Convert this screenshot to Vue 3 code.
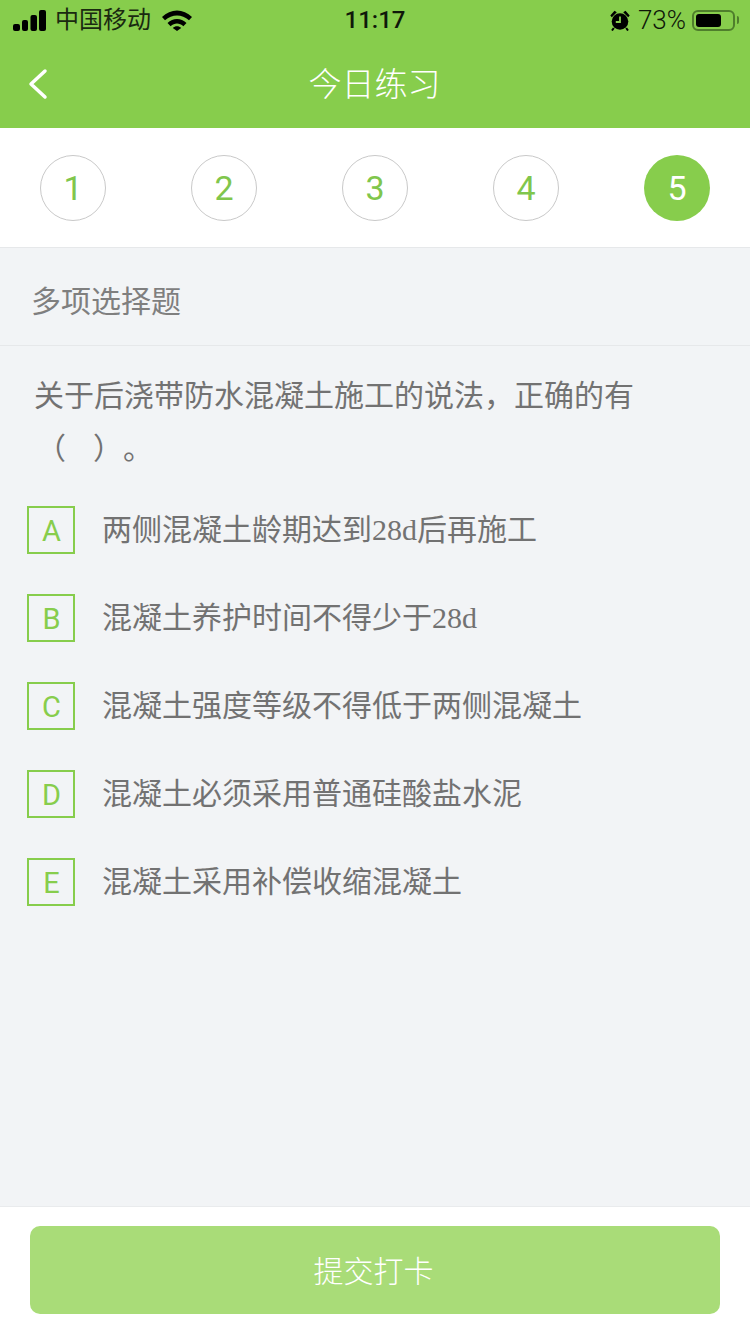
<script setup>
const steps = [1, 2, 3, 4, 5]
const current = 5

const options = [
  { key: 'A', text: '两侧混凝土龄期达到', num: '28d', tail: '后再施工' },
  { key: 'B', text: '混凝土养护时间不得少于', num: '28d', tail: '' },
  { key: 'C', text: '混凝土强度等级不得低于两侧混凝土', num: '', tail: '' },
  { key: 'D', text: '混凝土必须采用普通硅酸盐水泥', num: '', tail: '' },
  { key: 'E', text: '混凝土采用补偿收缩混凝土', num: '', tail: '' },
]
</script>

<template>
  <div class="page">
    <header class="top">
      <div class="status">
        <div class="status-left">
          <svg class="signal" width="33" height="21" viewBox="0 0 33 21">
            <rect x="0" y="14" width="7" height="7" rx="2" />
            <rect x="9" y="10" width="6" height="11" rx="2" />
            <rect x="17.500" y="5" width="6.500" height="16" rx="2" />
            <rect x="26" y="0" width="7" height="21" rx="2" />
          </svg>
          <span class="carrier">中国移动</span>
          <svg class="wifi" width="30" height="21" viewBox="0 0 30 21">
            <path d="M0 7C8.500-1.700 21.500-1.700 30 7l-3 3.300C20 4 10 4 3 10.300z" />
            <path d="M5.500 13C11 7.600 19 7.600 24.500 13l-3.100 3.300C17.500 12.600 12.500 12.600 8.600 16.300z" />
            <path d="M10.800 18C13 15.700 17 15.700 19.200 18L15 21z" />
          </svg>
        </div>
        <span class="time">11:17</span>
        <div class="status-right">
          <svg class="alarm" width="20" height="21" viewBox="0 0 20 21">
            <circle cx="10" cy="11.500" r="8.300" />
            <path d="M.3 5.500L4.500.7l2.300 1.500-5 5zM19.700 5.500L15.500.7l-2.300 1.500 5 5z" />
            <path class="hands" d="M10 6.500v5.500H5.800" />
            <path d="M3.800 18l-1.800 2.500M16.200 18l1.800 2.500" stroke="#000" stroke-width="2" />
          </svg>
          <span class="percent">73%</span>
          <div class="battery"><div class="level"></div></div>
          <div class="battery-cap"></div>
        </div>
      </div>
      <div class="nav">
        <svg class="back" width="22" height="34" viewBox="0 0 22 34">
          <path d="M18 4L4 17l14 13" />
        </svg>
        <h1 class="title">今日练习</h1>
      </div>
    </header>

    <div class="steps">
      <div
        v-for="n in steps"
        :key="n"
        class="step"
        :class="{ active: n === current }"
      >{{ n }}</div>
    </div>

    <main class="body">
      <div class="kind">多项选择题</div>
      <div class="question">
        <p class="stem">关于后浇带防水混凝土施工的说法，正确的有</p>
        <p class="stem blank">（<span class="gap"></span>）。</p>
      </div>
      <ul class="options">
        <li v-for="o in options" :key="o.key" class="option">
          <span class="letter">{{ o.key }}</span>
          <span class="text">{{ o.text }}<span v-if="o.num" class="num">{{ o.num }}</span>{{ o.tail }}</span>
        </li>
      </ul>
    </main>

    <footer class="bottom">
      <button class="submit" type="button">提交打卡</button>
    </footer>
  </div>
</template>

<style scoped>
.page {
  width: 750px;
  height: 1334px;
  display: flex;
  flex-direction: column;
  background: #f2f4f6;
  font-family: "Liberation Sans", "Noto Sans CJK SC", sans-serif;
  overflow: hidden;
}

.top {
  height: 128px;
  flex: none;
  background: #87cd4c;
}

.status {
  height: 40px;
  padding: 0 11px 0 13px;
  display: flex;
  align-items: center;
  position: relative;
  color: #000;
}

.status-left {
  display: flex;
  align-items: center;
}

.signal {
  fill: #000;
}

.carrier {
  margin-left: 9px;
  font-size: 24px;
  line-height: 40px;
  color: #1a2a10;
}

.wifi {
  fill: #000;
  margin-left: 11px;
}

.time {
  position: absolute;
  left: 0;
  right: 0;
  text-align: center;
  font-family: Roboto, "Liberation Sans", sans-serif;
  font-size: 24px;
  font-weight: 500;
  color: #10180a;
}

.status-right {
  margin-left: auto;
  display: flex;
  align-items: center;
}

.alarm {
  fill: #000;
  margin-right: 8px;
}

.hands {
  fill: none;
  stroke: #87cd4c;
  stroke-width: 1.800;
}

.percent {
  font-family: Roboto, "Liberation Sans", sans-serif;
  font-weight: 300;
  font-size: 26px;
  color: #0e1608;
  margin-right: 6px;
}

.battery {
  width: 43px;
  height: 21px;
  border: 2px solid #4f7e2c;
  border-radius: 6px;
  padding: 2px;
  box-sizing: border-box;
}

.level {
  width: 72%;
  height: 100%;
  background: #000;
  border-radius: 3px;
}

.battery-cap {
  width: 2px;
  height: 8px;
  margin-left: 2px;
  background: #4f7e2c;
  border-radius: 0 2px 2px 0;
}

.nav {
  height: 88px;
  display: flex;
  align-items: center;
  justify-content: center;
  position: relative;
}

.back {
  position: absolute;
  left: 27px;
  top: 27px;
  fill: none;
  stroke: #fff;
  stroke-width: 3.500;
  stroke-linecap: round;
  stroke-linejoin: round;
}

.title {
  margin: 0 1px 5px 0;
  font-size: 33px;
  font-weight: 300;
  color: #fff;
}

.steps {
  height: 120px;
  flex: none;
  padding: 0 40px;
  box-sizing: border-box;
  display: flex;
  align-items: center;
  justify-content: space-between;
  background: #fff;
  border-bottom: 1px solid #e6e8ea;
}

.step {
  width: 66px;
  height: 66px;
  box-sizing: border-box;
  border: 1px solid #c9c9c9;
  border-radius: 50%;
  display: flex;
  align-items: center;
  justify-content: center;
  font-family: Roboto, "Liberation Sans", sans-serif;
  font-size: 34px;
  color: #80c64c;
}

.step.active {
  border: 0;
  background: #87cd4c;
  color: #fff;
}

.body {
  flex: 1;
}

.kind {
  height: 98px;
  box-sizing: border-box;
  padding-left: 31px;
  line-height: 108px;
  font-size: 30px;
  color: #7f7f7f;
  border-bottom: 1px solid #e6e8ea;
}

.question {
  padding: 23px 32px 0 34px;
}

.stem {
  margin: 0;
  font-size: 30px;
  line-height: 53px;
  color: #727272;
}

.blank {
  margin-left: 2px;
  text-spacing-trim: space-all;
}

.gap {
  display: inline-block;
  width: 27px;
}

.options {
  list-style: none;
  margin: 0;
  padding: 31px 0 0 27px;
}

.option {
  height: 88px;
  display: flex;
  align-items: flex-start;
}

.letter {
  width: 48px;
  height: 48px;
  box-sizing: border-box;
  border: 2px solid #87cd4c;
  padding: 2px 0 0 1px;
  display: flex;
  align-items: center;
  justify-content: center;
  font-family: Roboto, "Liberation Sans", sans-serif;
  font-size: 29px;
  color: #87cd4c;
}

.text {
  margin-left: 27px;
  font-size: 30px;
  line-height: 48px;
  color: #727272;
}

.num {
  font-family: "Liberation Serif", serif;
}

.bottom {
  height: 128px;
  flex: none;
  box-sizing: border-box;
  padding: 19px 30px 0;
  background: #fff;
  border-top: 1px solid #e9ebed;
}

.submit {
  display: block;
  width: 100%;
  height: 88px;
  padding: 0 3px 2px 0;
  border: 0;
  border-radius: 10px;
  background: #a9dc78;
  color: #fff;
  font-family: inherit;
  font-size: 30px;
  font-weight: 300;
}
</style>

<style>
body {
  background: #f2f4f6;
}
</style>
